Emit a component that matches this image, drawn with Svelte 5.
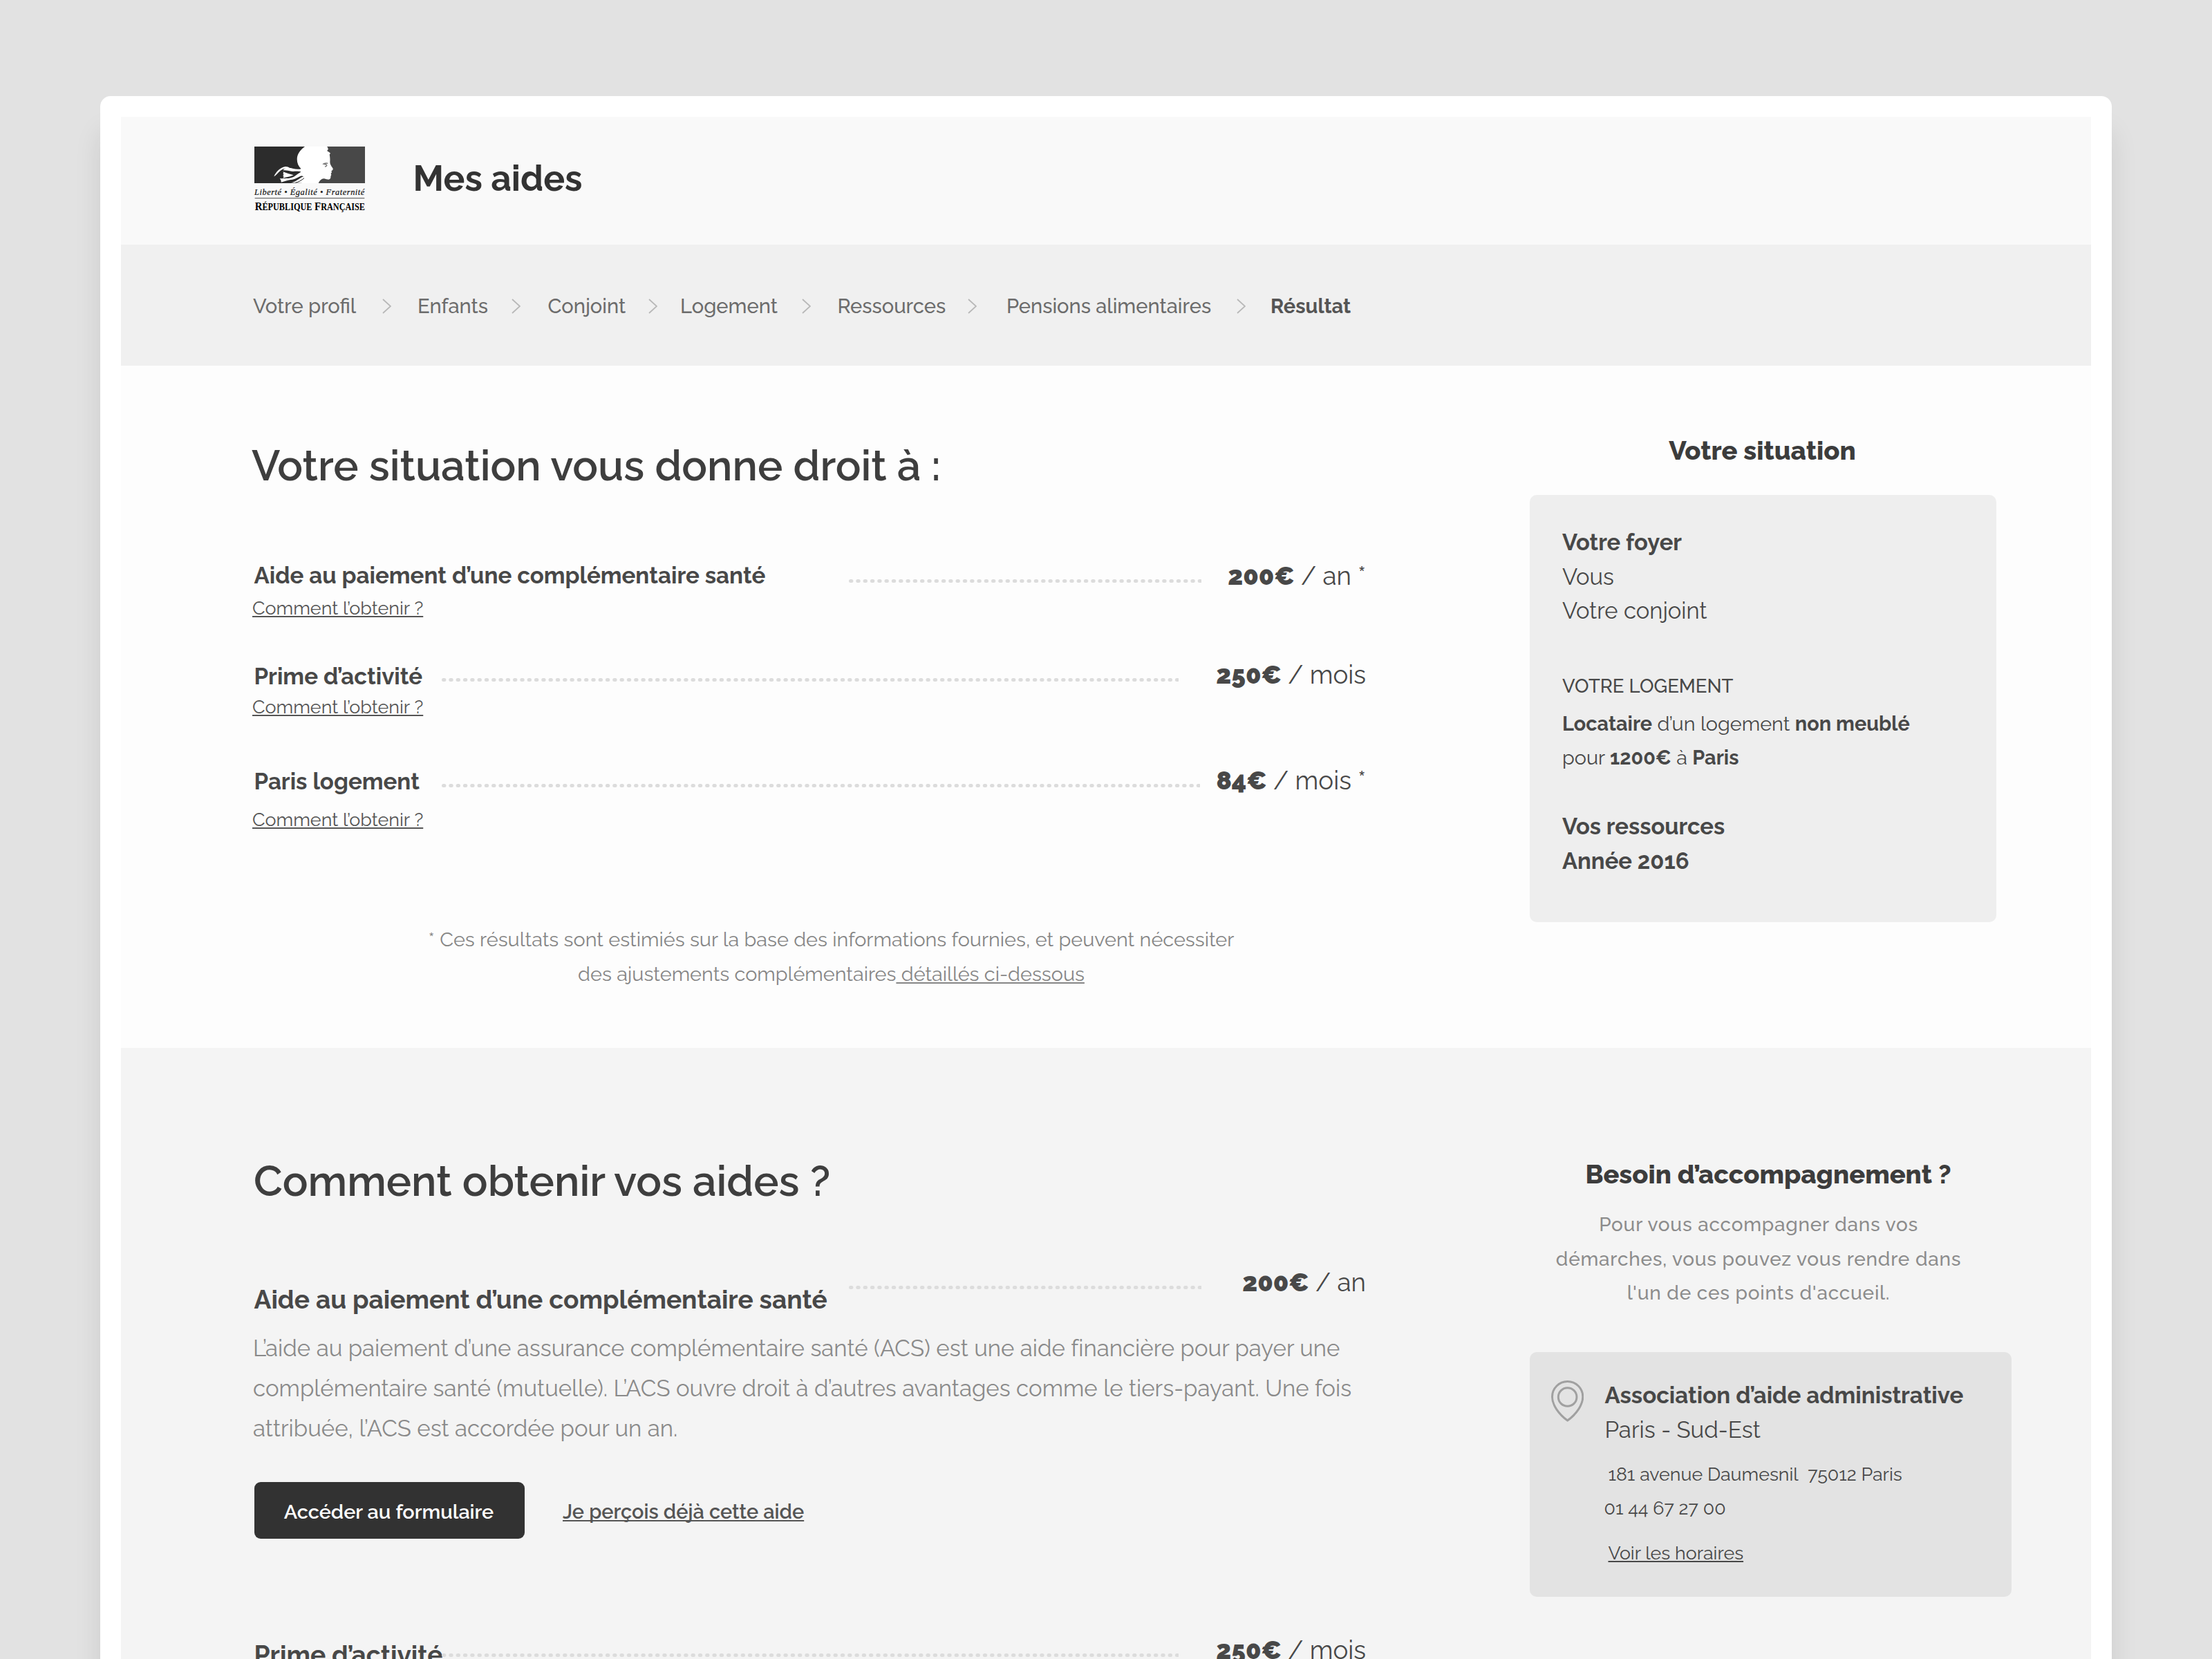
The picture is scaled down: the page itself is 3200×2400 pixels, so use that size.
<script>
  const steps = ['Votre profil', 'Enfants', 'Conjoint', 'Logement', 'Ressources', 'Pensions alimentaires', 'Résultat'];

  const benefits = [
    { name: 'Aide au paiement d’une complémentaire santé', amount: '200€', period: '/ an *', kind: 'first' },
    { name: 'Prime d’activité', amount: '250€', period: '/ mois', kind: 'second' },
    { name: 'Paris logement', amount: '84€', period: '/ mois *', kind: 'third' }
  ];
</script>

{#snippet dots()}
  <svg class="dots" height="5" aria-hidden="true">
    <line x1="2.5" y1="2.5" x2="100%" y2="2.5" />
  </svg>
{/snippet}

<div class="page">
  <div class="frame">
    <div class="screen">
      <header>
        <svg class="logo" viewBox="24 21 480 297" width="160" height="99" role="img" aria-label="République Française">
          <rect x="24" y="21" width="260" height="159" fill="#2c2c2c" />
          <rect x="284" y="21" width="220" height="159" fill="#484848" />
          <!-- profile -->
          <path
            fill="#fff"
            d="M243 21C228 32 214 47 210 66C207 86 212 104 227 118L222 146L236 150C240 164 236 172 228 180H302C307 168 315 161 326 160C334 162 340 164 346 164C353 163 356 158 355 151L358 143L356 138L360 133L358 127C364 124 367 120 364 115C357 106 352 98 352 88C353 76 352 64 350 56L354 50C350 46 344 43 339 39C346 36 345 27 339 21Z"
          />
          <!-- hair ribbons -->
          <path
            fill="#fff"
            d="M109 151C118 131 134 113 158 108C166 107 172 110 178 114C158 112 142 119 130 132C122 141 116 147 109 151ZM148 124C158 112 176 112 190 116C204 120 216 121 228 117L234 132C214 126 196 130 184 128C172 126 158 122 148 124ZM147 130C162 136 178 141 194 145C184 151 168 152 148 158C153 153 152 150 147 148C152 145 153 142 148 140C151 137 151 133 147 130ZM134 160C152 159 174 162 192 154C206 147 214 136 230 130L240 144C222 148 206 162 190 164C174 164 156 172 140 176C141 170 138 164 134 160ZM182 178C198 176 214 164 226 156C234 151 242 150 248 152L244 180Z"
          />
          <path fill="none" stroke="#2c2c2c" stroke-width="3" d="M202 178C216 175 228 168 240 158" />
          <path fill="none" stroke="#777" stroke-width="4" d="M321 98C328 93 336 92 343 94M328 99C334 97 339 99 338 104C336 108 333 108 330 108" />
          <text class="motto" x="24" y="230" textLength="478">Liberté • Égalité • Fraternité</text>
          <rect x="26" y="243" width="476" height="4" fill="#777" />
          <text class="state" x="26" y="297" textLength="478" lengthAdjust="spacingAndGlyphs">R<tspan class="small">ÉPUBLIQUE</tspan> F<tspan class="small">RANÇAISE</tspan></text>
        </svg>
        <h1>Mes aides</h1>
      </header>

      <nav>
        {#each steps as step, i}
          {#if i > 0}
            <svg class="chevron" viewBox="0 0 13 22" width="13" height="22" aria-hidden="true">
              <path d="M1 1L12 11L1 21" />
            </svg>
          {/if}
          <span class:current={i === steps.length - 1}>{step}</span>
        {/each}
      </nav>

      <section class="summary">
        <main>
          <h2>Votre situation vous donne droit à :</h2>
          {#each benefits as b}
            <article class={b.kind}>
              <div class="row">
                <strong class="name">{b.name}</strong>
                {@render dots()}
                <span class="price"><b>{b.amount}</b> {b.period}</span>
              </div>
              <a class="how">Comment l’obtenir ?</a>
            </article>
          {/each}
          <p class="note">
            * Ces résultats sont estimiés sur la base des informations fournies, et peuvent nécessiter<br />des
            ajustements complémentaires<u>&nbsp;détaillés ci-dessous</u>
          </p>
        </main>

        <aside>
          <h3>Votre situation</h3>
          <div class="card profile">
            <div class="household">
              <strong>Votre foyer</strong>
              <span>Vous</span>
              <span>Votre conjoint</span>
            </div>
            <h4>VOTRE LOGEMENT</h4>
            <p class="housing"><b>Locataire</b> d’un logement <b>non meublé</b><br />pour <b>1200€</b> à <b>Paris</b></p>
            <div class="income">
              <strong>Vos ressources</strong>
              <strong>Année 2016</strong>
            </div>
          </div>
        </aside>
      </section>

      <section class="details">
        <main>
          <h2>Comment obtenir vos aides ?</h2>
          <div class="row first">
            <strong class="name">Aide au paiement d’une complémentaire santé</strong>
            {@render dots()}
            <span class="price"><b>200€</b> / an</span>
          </div>
          <p class="text">
            L’aide au paiement d’une assurance complémentaire santé (ACS) est une aide financière pour payer une<br />
            complémentaire santé (mutuelle). L’ACS ouvre droit à d’autres avantages comme le tiers-payant. Une fois<br />
            attribuée, l’ACS est accordée pour un an.
          </p>
          <div class="actions">
            <button>Accéder au formulaire</button>
            <a>Je perçois déjà cette aide</a>
          </div>
          <div class="row second">
            <strong class="name">Prime d’activité</strong>
            {@render dots()}
            <span class="price"><b>250€</b> / mois</span>
          </div>
        </main>

        <aside>
          <h3>Besoin d’accompagnement ?</h3>
          <p class="help">
            Pour vous accompagner dans vos<br />démarches, vous pouvez vous rendre dans<br />l'un de ces points d'accueil.
          </p>
          <div class="card place">
            <svg class="pin" viewBox="42 52 142 180" width="47.3" height="60" aria-hidden="true">
              <path d="M113 56.5C76 56.5 46.5 86 46.5 123C46.5 158 75 199 113 226C151 199 179.5 158 179.5 123C179.5 86 150 56.5 113 56.5Z" />
              <circle cx="113" cy="124" r="40" />
            </svg>
            <div class="address">
              <strong>Association d’aide administrative</strong>
              <span class="area">Paris - Sud-Est</span>
              <span class="street">181 avenue Daumesnil&nbsp; 75012 Paris</span>
              <span class="phone">01 44 67 27 00</span>
              <a>Voir les horaires</a>
            </div>
          </div>
        </aside>
      </section>
    </div>
  </div>
</div>

<style>
  :global(body) {
    overflow: hidden;
    background: #e2e2e2;
  }
  h1, h2, h3, h4, p {
    margin: 0;
  }
  a, u {
    text-decoration: underline;
    text-decoration-thickness: 2px;
    text-decoration-skip-ink: none;
    text-underline-offset: 2px;
  }
  .page {
    box-sizing: border-box;
    width: 3200px;
    height: 2400px;
    padding: 139px 145px 0;
    overflow: hidden;
    background: #e2e2e2;
    color: #484848;
    font-family: Raleway, 'Open Sans', sans-serif;
  }
  .frame {
    box-sizing: border-box;
    height: 2500px;
    padding: 30px;
    border-radius: 15px;
    background: #fff;
    box-shadow: 0 50px 38px rgba(0, 0, 0, 0.1);
  }
  .screen {
    height: 100%;
    overflow: hidden;
  }

  header {
    display: flex;
    gap: 69.5px;
    box-sizing: border-box;
    height: 185px;
    padding: 43px 0 0 193px;
    background: #f9f9f9;
  }
  .logo {
    overflow: visible;
  }
  .motto {
    font: italic 37px 'Liberation Serif', serif;
    fill: #111;
    stroke: #111;
    stroke-width: 0.6;
  }
  .state {
    font: bold 50px 'Liberation Serif', serif;
    fill: #000;
  }
  .small {
    font-size: 41px;
  }
  h1 {
    margin-top: 16.3px;
    color: #333;
    font-size: 51.5px;
    font-weight: 700;
    line-height: 60px;
  }

  nav {
    display: grid;
    grid-template-columns: 187px 51px 136px 52.5px 145.5px 46px 176px 51.5px 188.5px 56px 333px 49px auto;
    box-sizing: border-box;
    height: 175px;
    padding: 71.5px 0 0 191px;
    background: #f0f0f0;
    color: #6c6c6c;
    font-size: 29.1px;
    font-weight: 500;
    line-height: 34px;
    white-space: nowrap;
  }
  .chevron {
    margin-top: 6px;
    fill: none;
    stroke: #b8b8b8;
    stroke-width: 1.8;
  }
  .current {
    color: #555;
    font-size: 29px;
    font-weight: 700;
  }

  section {
    display: grid;
    grid-template-columns: 1611px 1fr;
    column-gap: 238px;
    box-sizing: border-box;
    padding-left: 189px;
  }
  .summary {
    height: 987px;
    background: #fdfdfd;
  }
  .details {
    height: 1000px;
    background: #f4f4f4;
  }
  h2 {
    color: #3e3e3e;
    font-size: 61.1px;
    font-weight: 600;
    line-height: 72px;
    white-space: nowrap;
  }
  .summary h2 {
    margin: 109.2px 0 101.4px;
  }
  .details h2 {
    margin: 157.2px 0 88.6px 3px;
  }

  .row {
    display: grid;
    grid-template-columns: 275px 1066px 1fr;
    align-items: start;
  }
  .first .row, .row.first {
    grid-template-columns: 864px 510px 1fr;
  }
  .third .row {
    grid-template-columns: 275px 1097px 1fr;
  }
  .name {
    margin: 1.1px 0 0 3.5px;
    font-size: 33.1px;
    font-weight: 700;
    line-height: 40px;
    white-space: nowrap;
  }
  .second .name {
    margin-top: 3.6px;
  }
  .third .name {
    margin-top: 2.9px;
  }
  .details .name {
    font-size: 37.1px;
    line-height: 44px;
  }
  .dots {
    width: 100%;
    margin-top: 26.3px;
  }
  .dots line {
    stroke: #dcdcdc;
    stroke-width: 5;
    stroke-linecap: round;
    stroke-dasharray: 1.4 8.9;
  }
  .price {
    justify-self: end;
    margin-right: -1px;
    font-size: 36.7px;
    line-height: 44px;
    white-space: nowrap;
  }
  .price b {
    font-weight: 900;
  }
  .how {
    display: block;
    width: max-content;
    margin-left: 1px;
    color: #555;
    font-size: 26.9px;
    line-height: 32px;
  }
  article .row {
    height: 52.5px;
  }
  article.second {
    margin-top: 58.9px;
  }
  article.third {
    margin-top: 68.5px;
  }
  article.third .row {
    height: 62px;
  }
  .note {
    width: 1300px;
    margin: 132.4px 0 0 188.5px;
    color: #868686;
    font-size: 28.8px;
    line-height: 50px;
    text-align: center;
    white-space: nowrap;
  }

  .details .row.first {
    height: 88.6px;
  }
  .details .row.first .name {
    margin-top: 24.6px;
  }
  .details .row.second .name {
    margin: 5.9px 0 0 3.5px;
  }
  .text {
    margin-left: 2px;
    color: #8a8a8a;
    font-size: 33px;
    letter-spacing: 0.01px;
    line-height: 57.7px;
    white-space: nowrap;
    font-variant-ligatures: common-ligatures;
  }
  .actions {
    display: flex;
    align-items: center;
    gap: 55.5px;
    margin: 48.4px 0 140px 4px;
    font-size: 28.8px;
    font-weight: 600;
  }
  button {
    width: 390.5px;
    height: 82px;
    padding: 4.6px 1.5px 0 0;
    border: 0;
    border-radius: 9px;
    background: #323232;
    color: #fff;
    font: inherit;
  }
  .actions a {
    padding-top: 4.6px;
    color: #555;
    font-size: 28.9px;
  }

  h3 {
    color: #3c3c3c;
    font-size: 38px;
    font-weight: 800;
    line-height: 44px;
    text-align: center;
  }
  .card {
    box-sizing: border-box;
    border-radius: 10px;
  }
  .summary h3 {
    width: 673px;
    margin: 100.6px 0 42.4px;
  }
  .profile {
    width: 675px;
    height: 618.5px;
    padding: 44.4px 0 0 47px;
    background: #eee;
  }
  .household, .income, .address {
    display: flex;
    flex-direction: column;
    align-items: flex-start;
    font-size: 32.8px;
    line-height: 49.4px;
  }
  h4 {
    margin: 63.2px 0 11.2px;
    font-size: 27.5px;
    font-weight: 500;
    line-height: 40px;
  }
  .housing {
    margin-bottom: 49.5px;
    font-size: 28.85px;
    line-height: 49.5px;
  }

  .details h3 {
    width: 690px;
    margin: 161.2px 0 26.2px;
  }
  .help {
    width: 662px;
    color: #8c8c8c;
    font-size: 28px;
    font-weight: 500;
    letter-spacing: 0.75px;
    line-height: 49.5px;
    text-align: center;
  }
  .place {
    display: flex;
    gap: 30.2px;
    width: 697px;
    height: 354px;
    margin-top: 60.1px;
    padding: 37.5px 0 0 31px;
    background: #e3e3e3;
  }
  .pin {
    flex: none;
    margin-top: 3.3px;
    fill: none;
    stroke: #a0a0a0;
    stroke-width: 9;
  }
  .address {
    margin-top: 1px;
    font-size: 33.1px;
    line-height: 49.5px;
    white-space: nowrap;
  }
  .street, .phone, .address a {
    font-size: 26.8px;
  }
  .street {
    margin: 14.3px 0 0 5px;
  }
  .phone {
    margin-left: -1px;
  }
  .address a {
    margin: 15.6px 0 0 5px;
  }
</style>
